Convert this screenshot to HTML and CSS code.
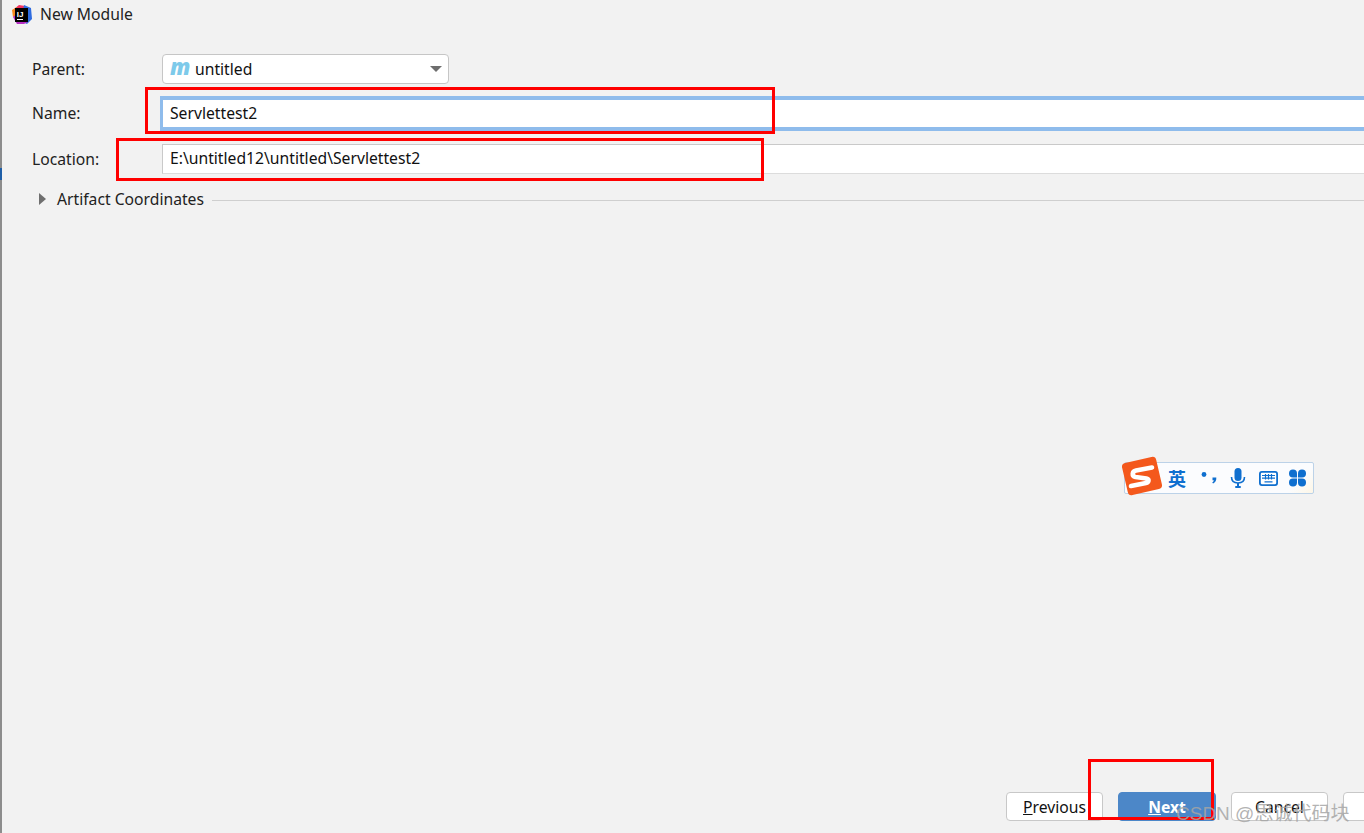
FILE: index.html
```html
<!DOCTYPE html>
<html lang="en">
<head>
<meta charset="utf-8">
<title>New Module</title>
<link rel="stylesheet" href="styles.css">
</head>
<body>
<div class="dialog">
  <header class="titlebar">
    <svg class="app-icon" width="22" height="22" viewBox="0 0 22 22">
      <path d="M3 6 8 2l6 1-3 9-7 3z" fill="#f5325f"/>
      <path d="M1 7l5-3 1 8-5 2z" fill="#f98a1c"/>
      <path d="M13 2l7 3 1 11-5 5-6-3z" fill="#2f6ce0"/>
      <path d="M2 14l5-4 10 9-4 2H6z" fill="#b52dc4"/>
      <rect x="4" y="5" width="13" height="14" fill="#000"/>
      <rect x="6" y="16" width="6" height="1" fill="#fff"/>
      <text x="5.8" y="13.500" class="app-icon-text">IJ</text>
    </svg>
    <span class="title">New Module</span>
  </header>
  <main class="form">
    <div class="row row-parent">
      <label class="label">Parent:</label>
      <div class="combo">
        <span class="m-icon">m</span>
        <span class="combo-text">untitled</span>
        <span class="caret"></span>
      </div>
    </div>
    <div class="row row-name">
      <label class="label">Name:</label>
      <div class="input input-focus">Servlettest2</div>
    </div>
    <div class="row row-location">
      <label class="label">Location:</label>
      <div class="input">E:\untitled12\untitled\Servlettest2</div>
    </div>
    <div class="artifact">
      <span class="tri"></span>
      <span class="artifact-text">Artifact Coordinates</span>
      <span class="rule"></span>
    </div>
  </main>
  <footer class="footer">
    <button class="btn"><u>P</u>revious</button>
    <button class="btn btn-primary"><u>N</u>ext</button>
    <button class="btn">Cancel</button>
    <button class="btn btn-cut"></button>
  </footer>
</div>

<div class="edge-spot"></div>

<div class="mark mark-name"></div>
<div class="mark mark-location"></div>
<div class="mark mark-next"></div>

<div class="ime">
  <svg class="ime-logo" width="42" height="40" viewBox="0 0 42 40">
    <rect x="3.500" y="3.500" width="35" height="33" rx="4" transform="rotate(-13 21 20)" fill="#f4581c"/>
    <path d="M31 11.500 15 14.500c-4 .8-4.500 5.500-.5 6.500l11 1.500c3 .6 2.500 4-.5 4.500L10 30" fill="none" stroke="#fff" stroke-width="4.600" stroke-linecap="round" stroke-linejoin="round"/>
  </svg>
  <span class="ime-zh">英</span>
  <svg class="ime-punct" width="20" height="18" viewBox="0 0 20 18"><circle cx="4" cy="5.500" r="2.400" fill="#0f6fcf"/><path d="M12.500 8.500h3.800c.3 3-1 5-3.200 6l-.9-1c1-.5 1.500-1.400 1.600-2.300h-1.300z" fill="#0f6fcf"/></svg>
  <svg class="ime-mic" width="16" height="21" viewBox="0 0 16 21"><rect x="4.500" y="0" width="7" height="13" rx="3.500" fill="#0f6fcf"/><path d="M1.500 9c0 4 2.800 6 6.500 6s6.500-2 6.500-6" fill="none" stroke="#0f6fcf" stroke-width="1.600"/><rect x="7" y="15" width="2" height="3.500" fill="#0f6fcf"/><rect x="5" y="18" width="6" height="2" rx="1" fill="#0f6fcf"/></svg>
  <svg class="ime-kbd" width="19" height="15" viewBox="0 0 19 15"><rect x=".9" y=".9" width="17.200" height="13.200" rx="2" fill="#fff" stroke="#0f6fcf" stroke-width="1.800"/><path d="M3 4.500h13M3 7.200h13M5.500 10.800h8M6.500 3v5.500M9.500 3v5.500M12.500 3v5.500" stroke="#0f6fcf" stroke-width="1.200" fill="none"/></svg>
  <svg class="ime-apps" width="19" height="18" viewBox="0 0 18 18"><g fill="#0f6fcf"><path d="M.5 4.500a4 4 0 0 1 8 0v4h-4a4 4 0 0 1-4-4z"/><path d="M17.500 4.500a4 4 0 0 0-8 0v4h4a4 4 0 0 0 4-4z"/><path d="M.5 13.500a4 4 0 0 0 8 0v-4h-4a4 4 0 0 0-4 4z"/><path d="M17.500 13.500a4 4 0 0 1-8 0v-4h4a4 4 0 0 1 4 4z"/></g></svg>
</div>

<div class="watermark">CSDN @思诚代码块</div>
</body>
</html>
```
FILE: styles.css
```css
* { box-sizing: border-box; }
html, body { margin: 0; height: 100%; overflow: hidden; }
body {
  position: relative;
  width: 1364px;
  height: 833px;
  background: #f2f2f2;
  color: #111;
  font-family: "Noto Sans", "Open Sans", sans-serif;
  font-size: 15.7px;
}
.dialog {
  display: flex;
  flex-direction: column;
  height: 833px;
  border-left: 2px solid #8d8d8d;
}
.titlebar {
  display: flex;
  align-items: center;
  height: 28px;
  padding-left: 9px;
  gap: 7px;
  flex: none;
}
.app-icon { flex: none; }
.app-icon-text { font: 700 8px "Liberation Sans", sans-serif; fill: #fff; }
.title { color: #222; }
.form {
  flex: 1;
  padding: 26px 0 0 30px;
  display: flex;
  flex-direction: column;
}
.row { display: flex; align-items: center; }
.label { width: 130px; flex: none; color: #222; }
.combo {
  width: 287px;
  height: 30px;
  background: #fff;
  border: 1px solid #c6c6c6;
  border-radius: 4px;
  display: flex;
  align-items: center;
  padding-left: 7px;
}
.m-icon {
  font: italic 800 22px/20px "Open Sans", sans-serif;
  color: #7dcaea;
  width: 25px;
  margin-top: -6px;
}
.combo-text { flex: 1; }
.caret {
  width: 0;
  height: 0;
  border-left: 6px solid transparent;
  border-right: 6px solid transparent;
  border-top: 6px solid #6e6e6e;
  margin-right: 6px;
}
.row-name { margin-top: 12px; }
.row-location { margin-top: 13px; }
.row-name .label { padding-bottom: 2px; }
.input {
  flex: 1;
  height: 30px;
  background: #fff;
  border: 1px solid #c9c9c9;
  border-bottom-color: #dcdcdc;
  border-right: 0;
  padding-left: 7px;
  line-height: 27px;
}
.input-focus {
  height: 35px;
  margin-left: -2px;
  border-style: solid;
  border-color: #8fbcec;
  border-width: 4px 0 4px 3px;
  line-height: 27px;
}
.artifact {
  display: flex;
  align-items: center;
  margin-top: 15px;
  padding-left: 7px;
  height: 20px;
}
.tri {
  width: 0;
  height: 0;
  border-top: 6px solid transparent;
  border-bottom: 6px solid transparent;
  border-left: 7px solid #6f6f6f;
  margin-right: 11px;
}
.artifact-text { color: #222; }
.rule { flex: 1; height: 1px; margin-top: 2px; background: #cfcfcf; margin-left: 8px; }
.footer {
  flex: none;
  display: flex;
  gap: 15px;
  padding: 0 0 12px 1004px;
  overflow: hidden;
}
.btn {
  flex: none;
  width: 97px;
  height: 29px;
  border: 1px solid #c8c8c8;
  border-radius: 4px;
  background: #fff;
  font: inherit;
  color: #111;
  padding: 0;
}
.btn-primary {
  width: 98px;
  background: #4c87c8;
  border-color: #4c87c8;
  color: #fff;
  font-weight: 700;
}
.btn-cut { width: 40px; }
.edge-spot { position: absolute; left: 0; top: 168px; width: 2px; height: 12px; background: #1f5fa8; }
.mark { position: absolute; border: 3px solid #ff0000; }
.mark-name { left: 145px; top: 87px; width: 630px; height: 47px; }
.mark-location { left: 116px; top: 138px; width: 648px; height: 43px; }
.mark-next { left: 1088px; top: 759px; width: 126px; height: 61px; }
.ime {
  position: absolute;
  left: 1124px;
  top: 462px;
  width: 190px;
  height: 32px;
  background: linear-gradient(135deg, #fbfcfe 88%, #fdf6e6 100%);
  border: 1px solid #bcd2e8;
  border-radius: 2px;
}
.ime-logo { position: absolute; left: -4px; top: -7px; }
.ime-zh {
  position: absolute;
  left: 43px;
  top: 4px;
  font: 700 18px/22px "Noto Sans CJK SC", sans-serif;
  color: #0f6fcf;
}
.ime-punct { position: absolute; left: 75px; top: 6px; }
.ime-mic { position: absolute; left: 105px; top: 5px; }
.ime-kbd { position: absolute; left: 134px; top: 8px; }
.ime-apps { position: absolute; left: 163px; top: 6px; }
.watermark {
  position: absolute;
  left: 1176px;
  top: 802px;
  font: 19px/24px "Liberation Sans", "Noto Sans CJK SC", sans-serif;
  color: rgba(165, 165, 165, .85);
  white-space: nowrap;
}
```
